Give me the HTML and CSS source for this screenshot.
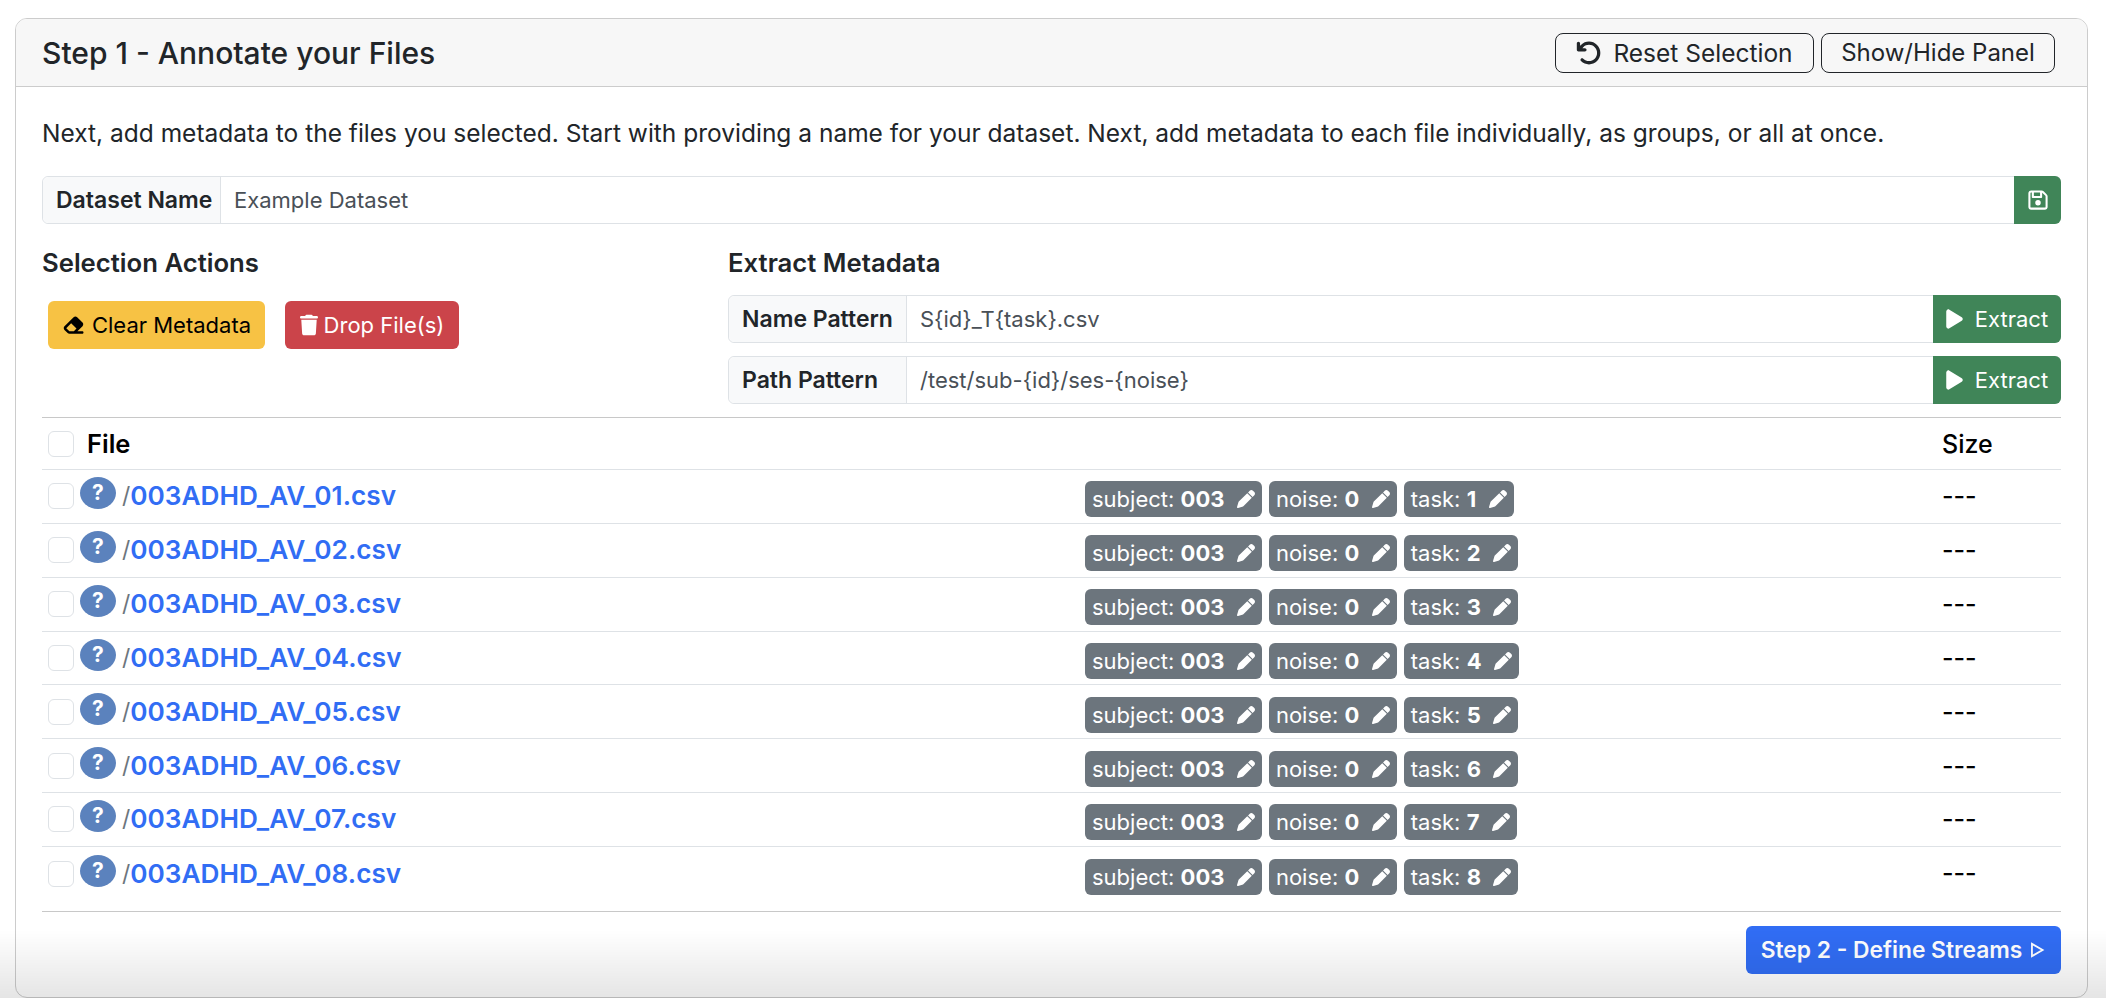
FILE: index.html
```html
<!DOCTYPE html>
<html lang="en">
<head>
  <meta charset="UTF-8" />
  <title>Annotate your Files</title>
  <link rel="stylesheet" href="styles.css">
</head>
<body>
  <svg class="defs" width="0" height="0">
    <symbol id="i-pen" viewBox="0 0 512 512"><path d="M362.7 19.3L314.3 67.7 444.3 197.7l48.4-48.4c25-25 25-65.5 0-90.5L453.3 19.3c-25-25-65.5-25-90.5 0zm-71 71L58.6 323.5c-10.4 10.4-18 23.3-22.2 37.4L1 481.2C-1.5 489.7 .8 498.8 7 505s15.3 8.5 23.7 6.1l120.3-35.4c14.1-4.2 27-11.8 37.4-22.2L421.7 220.3 291.7 90.3z"/></symbol>
    <symbol id="i-play" viewBox="0 0 384 512"><path d="M73 39c-14.8-9.1-33.4-9.4-48.5-.9S0 62.6 0 80V432c0 17.4 9.4 33.4 24.5 41.9s33.7 8.1 48.5-.9L361 297c14.3-8.7 23-24.2 23-41s-8.7-32.2-23-41L73 39z"/></symbol>
  </svg>

  <div class="card">
    <div class="card-header">
      <h1>Step 1 - Annotate your Files</h1>
      <div class="header-actions">
        <button class="btn-outline btn-reset">
          <svg class="icon-undo" viewBox="0 0 512 512"><path d="M125.7 160H176c17.7 0 32 14.3 32 32s-14.3 32-32 32H48c-17.7 0-32-14.3-32-32V64c0-17.7 14.3-32 32-32s32 14.3 32 32v51.2L97.6 97.6c87.5-87.5 229.3-87.5 316.8 0s87.5 229.3 0 316.8s-229.3 87.5-316.8 0c-12.5-12.5-12.5-32.8 0-45.3s32.8-12.5 45.3 0c62.5 62.5 163.8 62.5 226.3 0s62.5-163.8 0-226.3s-163.8-62.5-226.3 0L125.7 160z"/></svg>
          Reset Selection
        </button>
        <button class="btn-outline btn-toggle">Show/Hide Panel</button>
      </div>
    </div>

    <div class="card-body">
      <p class="intro">Next, add metadata to the files you selected. Start with providing a name for your dataset. Next, add metadata to each file individually, as groups, or all at once.</p>

      <div class="input-group">
        <span class="group-label label-dataset">Dataset Name</span>
        <span class="group-value">Example Dataset</span>
        <button class="btn-green btn-save">
          <svg class="icon-save" viewBox="0 0 448 512"><path d="M48 96V416c0 8.8 7.2 16 16 16H384c8.8 0 16-7.2 16-16V170.5c0-4.2-1.7-8.3-4.7-11.3l33.9-33.9c12 12 18.7 28.3 18.7 45.3V416c0 35.3-28.7 64-64 64H64c-35.3 0-64-28.7-64-64V96C0 60.7 28.7 32 64 32H309.5c17 0 33.3 6.7 45.3 18.7l74.5 74.5-33.9 33.9L320.8 84.7c-.3-.3-.5-.5-.8-.8V184c0 13.3-10.7 24-24 24H104c-13.3 0-24-10.7-24-24V80H64c-8.8 0-16 7.2-16 16zm80-16v80H272V80H128zm32 240a64 64 0 1 1 128 0 64 64 0 1 1 -128 0z"/></svg>
        </button>
      </div>

      <div class="actions-row">
        <div>
          <h2>Selection Actions</h2>
          <div class="selection-buttons">
            <button class="btn-fill btn-yellow">
              <svg class="icon-eraser" viewBox="0 0 576 512"><path d="M290.7 57.4L57.4 290.7c-25 25-25 65.5 0 90.5l80 80c12 12 28.3 18.7 45.3 18.7H288h9.4H512c17.7 0 32-14.3 32-32s-14.3-32-32-32H387.9L518.6 285.3c25-25 25-65.5 0-90.5L381.3 57.4c-25-25-65.5-25-90.5 0zM297.4 416H288l-105.4 0-80-80L227.3 211.3 364.7 348.7 297.4 416z"/></svg>
              Clear Metadata
            </button>
            <button class="btn-fill btn-red">
              <svg class="icon-trash" viewBox="0 0 448 512"><path d="M135.2 17.7L128 32H32C14.3 32 0 46.3 0 64S14.3 96 32 96H416c17.7 0 32-14.3 32-32s-14.3-32-32-32H320l-7.2-14.3C307.4 6.8 296.3 0 284.2 0H163.8c-12.1 0-23.2 6.8-28.6 17.7zM416 128H32L53.2 467c1.6 25.3 22.6 45 47.9 45H346.9c25.3 0 46.3-19.7 47.9-45L416 128z"/></svg>
              Drop File(s)
            </button>
          </div>
        </div>
        <div>
          <h2>Extract Metadata</h2>
          <div class="input-group">
            <span class="group-label label-pattern">Name Pattern</span>
            <span class="group-value">S{id}_T{task}.csv</span>
            <button class="btn-green btn-extract"><svg class="icon-play"><use href="#i-play"/></svg>Extract</button>
          </div>
          <div class="input-group group-second">
            <span class="group-label label-pattern">Path Pattern</span>
            <span class="group-value">/test/sub-{id}/ses-{noise}</span>
            <button class="btn-green btn-extract"><svg class="icon-play"><use href="#i-play"/></svg>Extract</button>
          </div>
        </div>
      </div>

      <div class="file-table">
        <div class="file-head">
          <span class="check"></span>
          <span class="head-file">File</span>
          <span class="col-size head-size">Size</span>
        </div>

        <div class="file-row">
          <div class="file-cell"><span class="check"></span><span class="help">?</span><span class="slash">/</span><a class="file-link">003ADHD_AV_01.csv</a></div>
          <div class="tags">
            <span class="tag">subject: <b>003</b><svg><use href="#i-pen"/></svg></span>
            <span class="tag">noise: <b>0</b><svg><use href="#i-pen"/></svg></span>
            <span class="tag">task: <b>1</b><svg><use href="#i-pen"/></svg></span>
          </div>
          <div class="col-size">---</div>
        </div>
        <div class="file-row">
          <div class="file-cell"><span class="check"></span><span class="help">?</span><span class="slash">/</span><a class="file-link">003ADHD_AV_02.csv</a></div>
          <div class="tags">
            <span class="tag">subject: <b>003</b><svg><use href="#i-pen"/></svg></span>
            <span class="tag">noise: <b>0</b><svg><use href="#i-pen"/></svg></span>
            <span class="tag">task: <b>2</b><svg><use href="#i-pen"/></svg></span>
          </div>
          <div class="col-size">---</div>
        </div>
        <div class="file-row">
          <div class="file-cell"><span class="check"></span><span class="help">?</span><span class="slash">/</span><a class="file-link">003ADHD_AV_03.csv</a></div>
          <div class="tags">
            <span class="tag">subject: <b>003</b><svg><use href="#i-pen"/></svg></span>
            <span class="tag">noise: <b>0</b><svg><use href="#i-pen"/></svg></span>
            <span class="tag">task: <b>3</b><svg><use href="#i-pen"/></svg></span>
          </div>
          <div class="col-size">---</div>
        </div>
        <div class="file-row">
          <div class="file-cell"><span class="check"></span><span class="help">?</span><span class="slash">/</span><a class="file-link">003ADHD_AV_04.csv</a></div>
          <div class="tags">
            <span class="tag">subject: <b>003</b><svg><use href="#i-pen"/></svg></span>
            <span class="tag">noise: <b>0</b><svg><use href="#i-pen"/></svg></span>
            <span class="tag">task: <b>4</b><svg><use href="#i-pen"/></svg></span>
          </div>
          <div class="col-size">---</div>
        </div>
        <div class="file-row">
          <div class="file-cell"><span class="check"></span><span class="help">?</span><span class="slash">/</span><a class="file-link">003ADHD_AV_05.csv</a></div>
          <div class="tags">
            <span class="tag">subject: <b>003</b><svg><use href="#i-pen"/></svg></span>
            <span class="tag">noise: <b>0</b><svg><use href="#i-pen"/></svg></span>
            <span class="tag">task: <b>5</b><svg><use href="#i-pen"/></svg></span>
          </div>
          <div class="col-size">---</div>
        </div>
        <div class="file-row">
          <div class="file-cell"><span class="check"></span><span class="help">?</span><span class="slash">/</span><a class="file-link">003ADHD_AV_06.csv</a></div>
          <div class="tags">
            <span class="tag">subject: <b>003</b><svg><use href="#i-pen"/></svg></span>
            <span class="tag">noise: <b>0</b><svg><use href="#i-pen"/></svg></span>
            <span class="tag">task: <b>6</b><svg><use href="#i-pen"/></svg></span>
          </div>
          <div class="col-size">---</div>
        </div>
        <div class="file-row">
          <div class="file-cell"><span class="check"></span><span class="help">?</span><span class="slash">/</span><a class="file-link">003ADHD_AV_07.csv</a></div>
          <div class="tags">
            <span class="tag">subject: <b>003</b><svg><use href="#i-pen"/></svg></span>
            <span class="tag">noise: <b>0</b><svg><use href="#i-pen"/></svg></span>
            <span class="tag">task: <b>7</b><svg><use href="#i-pen"/></svg></span>
          </div>
          <div class="col-size">---</div>
        </div>
        <div class="file-row file-row-last">
          <div class="file-cell"><span class="check"></span><span class="help">?</span><span class="slash">/</span><a class="file-link">003ADHD_AV_08.csv</a></div>
          <div class="tags">
            <span class="tag">subject: <b>003</b><svg><use href="#i-pen"/></svg></span>
            <span class="tag">noise: <b>0</b><svg><use href="#i-pen"/></svg></span>
            <span class="tag">task: <b>8</b><svg><use href="#i-pen"/></svg></span>
          </div>
          <div class="col-size">---</div>
        </div>
      </div>

      <div class="footer-row">
        <button class="btn-next">Step 2 - Define Streams
          <svg class="icon-next" viewBox="0 0 16 16"><path d="M3.5 2.5 13 8l-9.500 5.500z"/></svg>
        </button>
      </div>
    </div>
  </div>
</body>
</html>
```

FILE: styles.css
```css
* {
  box-sizing: border-box;
}
html, body {
  height: 100%;
  overflow: hidden;
}
body {
  margin: 0;
  background: #fff;
  color: #212529;
  font-family: Inter, "Liberation Sans", sans-serif;
  font-size: 22px;
  line-height: 30px;
}
/* fade at the bottom of the window, lies over the card */
body::after {
  content: "";
  position: fixed;
  left: 0;
  right: 0;
  bottom: 0;
  height: 68px;
  background: linear-gradient(rgba(0, 0, 0, 0), rgba(0, 0, 0, 0.1));
  pointer-events: none;
}
button {
  font-family: inherit;
  cursor: pointer;
}
.defs {
  position: absolute;
}

.card {
  width: 2073px;
  height: 980px;
  margin: 18px 0 0 15px;
  border: 1px solid #ccc;
  border-radius: 12px;
  overflow: hidden;
}
.card-header {
  display: flex;
  align-items: center;
  justify-content: space-between;
  height: 68px;
  padding: 0 32px 0 26px;
  background: #f7f7f7;
  border-bottom: 1px solid #ccc;
}
h1 {
  margin: 0;
  font-size: 30px;
  font-weight: 500;
  line-height: 36px;
}
.header-actions {
  display: flex;
  gap: 7px;
}
.btn-outline {
  display: flex;
  align-items: center;
  justify-content: center;
  height: 40px;
  padding: 0;
  background: transparent;
  border: 1px solid #212529;
  border-radius: 8px;
  color: #212529;
  font-size: 24px;
}
.btn-reset {
  width: 259px;
  gap: 11px;
  font-size: 24.5px;
}
.btn-toggle {
  width: 234px;
}
.icon-undo {
  width: 26px;
  height: 26px;
  fill: #212529;
}

.card-body {
  padding: 31px 26px 0 26px;
}
.intro {
  margin: 0 0 28px;
  font-size: 24.5px;
}

.input-group {
  display: flex;
  height: 48px;
  border: 1px solid #dee2e6;
  border-radius: 6px;
  background: #fff;
}
.group-second {
  margin-top: 13px;
}
.group-label {
  display: flex;
  align-items: center;
  padding-left: 13px;
  background: #f8f9fa;
  border-right: 1px solid #dee2e6;
  border-radius: 6px 0 0 6px;
  font-size: 23px;
  font-weight: 600;
}
.label-dataset {
  width: 178px;
}
.label-pattern {
  width: 178px;
}
.group-value {
  flex: 1;
  display: flex;
  align-items: center;
  padding-left: 13px;
  color: #495057;
}
.btn-green {
  display: flex;
  align-items: center;
  justify-content: center;
  margin: -1px -1px -1px 0;
  padding: 0;
  background: #408558;
  border: 0;
  border-radius: 0 6px 6px 0;
  color: #fff;
  font-size: 22px;
}
.btn-save {
  width: 47px;
}
.btn-extract {
  width: 128px;
  gap: 12px;
}
.icon-save {
  width: 20px;
  height: 22px;
  fill: #fff;
}
.icon-play {
  width: 17px;
  height: 22px;
  fill: #fff;
}

.actions-row {
  display: grid;
  grid-template-columns: 686px 1fr;
  margin-top: 24px;
}
h2 {
  margin: 0 0 17px;
  font-size: 25.7px;
  font-weight: 600;
  line-height: 30px;
}
.selection-buttons {
  display: flex;
  gap: 20px;
  margin: 23px 0 0 6px;
}
.btn-fill {
  display: flex;
  align-items: center;
  justify-content: center;
  height: 48px;
  padding: 0;
  border: 0;
  border-radius: 6px;
  font-size: 22px;
}
.btn-yellow {
  width: 217px;
  gap: 7px;
  background: #f7c244;
  color: #000;
}
.btn-red {
  width: 174px;
  gap: 6px;
  background: #cb444a;
  color: #fff;
}
.icon-eraser {
  width: 23px;
  height: 20px;
  fill: #000;
}
.icon-trash {
  width: 18px;
  height: 22px;
  fill: #fff;
}

.file-table {
  margin-top: 13px;
  border-top: 1px solid #c8c8c8;
  border-bottom: 1px solid #c8c8c8;
}
.file-head {
  display: flex;
  align-items: center;
  height: 52px;
  padding-left: 6px;
  border-bottom: 1px solid #dee2e6;
  color: #000;
  font-size: 25.5px;
  font-weight: 600;
}
.head-file {
  margin-left: 13px;
}
.head-size {
  margin-left: auto;
  font-size: 25.5px;
  font-weight: 600;
}
.col-size {
  width: 119px;
  color: #000;
  font-size: 25px;
  font-weight: 500;
}
.file-row {
  display: flex;
  align-items: center;
  height: 53.85px;
  border-bottom: 1px solid #dee2e6;
}
.file-row-last {
  height: 64px;
  align-items: flex-start;
  padding-top: 12px;
  border-bottom: 0;
}
.file-cell {
  display: flex;
  align-items: center;
  width: 1043px;
  padding-left: 6px;
}
.check {
  flex: none;
  width: 26px;
  height: 26px;
  background: #fff;
  border: 1px solid #dee2e6;
  border-radius: 6px;
}
.help {
  flex: none;
  display: flex;
  align-items: center;
  justify-content: center;
  width: 36px;
  height: 32px;
  margin: -6px 0 0 6px;
  background: #5b82bd;
  border-radius: 50%;
  color: #fff;
  font-size: 21px;
  font-weight: 700;
}
.slash {
  margin-left: 6px;
  color: #6c757d;
  font-size: 23px;
}
.file-link {
  color: #316df4;
  font-size: 26.2px;
  font-weight: 600;
}
.tags {
  flex: 1;
  display: flex;
  gap: 7px;
  margin-top: 6px;
}
.file-row-last .tags {
  margin-top: 0;
}
.file-row-last .col-size {
  margin-top: -1px;
}
.tag {
  display: flex;
  align-items: center;
  height: 36px;
  padding: 0 7px;
  background: #6c757d;
  border-radius: 6px;
  color: #fff;
  font-size: 22px;
  white-space: pre;
}
.tag b {
  font-weight: 700;
}
.tag svg {
  width: 18px;
  height: 18px;
  margin-left: 12.5px;
  fill: #fff;
}

.footer-row {
  display: flex;
  justify-content: flex-end;
  margin-top: 14px;
}
.btn-next {
  display: flex;
  align-items: center;
  justify-content: center;
  gap: 6px;
  width: 315px;
  height: 48px;
  padding: 0;
  background: #316df4;
  border: 0;
  border-radius: 6px;
  color: #fff;
  font-size: 22.8px;
  font-weight: 600;
}
.icon-next {
  width: 18px;
  height: 18px;
  fill: none;
  stroke: #fff;
  stroke-width: 1.6;
}
```
